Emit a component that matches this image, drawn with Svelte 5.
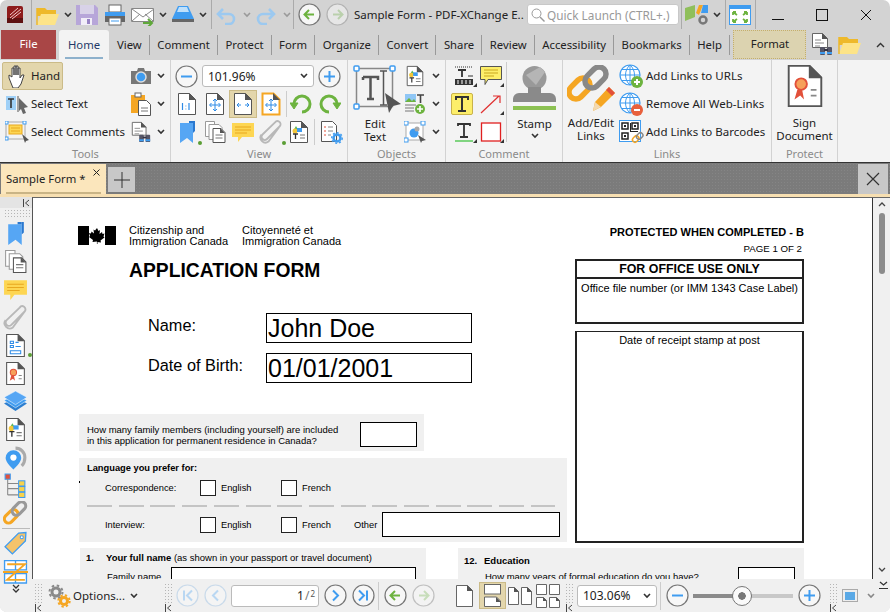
<script>
  const tabs = ['View', 'Comment', 'Protect', 'Form', 'Organize', 'Convert', 'Share', 'Review', 'Accessibility', 'Bookmarks', 'Help'];
  const PAPER = 'M3.5 1.5h11l6 6v15h-17z';
  const FOLD = 'M14 1l7 7h-7z';
</script>

{#snippet chev()}
  <svg class="chev" width="8" height="6" viewBox="0 0 8 6"><path d="M1 1l3 3 3-3" fill="none" stroke="#333" stroke-width="1.6" /></svg>
{/snippet}

{#snippet collapse()}
  <svg class="collapse" width="7" height="8" viewBox="0 0 7 8"><path d="M.5 0v8M6 1L2.5 4 6 7" fill="none" stroke="#444" /></svg>
{/snippet}

{#snippet round(d, ring, ink)}
  <svg class="round" width="23" height="23" viewBox="0 0 23 23">
    <circle cx="11.5" cy="11.5" r="10.5" fill="#f7f7f7" stroke={ring} stroke-width="1.2" />
    <path {d} fill="none" stroke={ink} stroke-width="2" />
  </svg>
{/snippet}

{#snippet paper(s, kind)}
  <svg width={s} height={s} viewBox="0 0 24 24">
    <path d={PAPER} fill="#fff" stroke={kind === 'fitorange' ? '#f5a623' : '#555'} stroke-width={kind === 'fitorange' ? 2 : 1} />
    <path d={FOLD} fill="#555" />
    {#if kind === '11'}
      <path d="M7.5 11v7M10.5 14h.8M10.5 17h.8M14 11v7" stroke="#2d8ae6" stroke-width="1.2" fill="none" />
    {:else if kind === 'fit' || kind === 'fitorange'}
      <path d="M12 7v12M7 13h10M10 9l2-2 2 2M10 17l2 2 2-2M8.5 11l-2 2 2 2M15.5 11l2 2-2 2" stroke="#2d8ae6" fill="none" />
    {:else if kind === 'wide'}
      <path d="M6 13h4M14 13h4M8 11l-2 2 2 2M16 11l2 2-2 2" stroke="#2d8ae6" fill="none" />
    {:else if kind === 'form'}
      <path d="M7 8h3v2H7zM7 12h3v2H7zM12 9h3M12 13h5M7 17h10v3H7z" stroke="#2d8ae6" fill="none" />
    {:else if kind === 'sign'}
      <circle cx="10" cy="11" r="3" fill="#f6a05a" stroke="#e2503a" />
      <path d="M8 14l-1.5 5 3-2 2 2-1-5" fill="#e2503a" />
      <path d="M15 14h3M15 17h3" stroke="#888" />
    {:else if kind === 'content'}
      <path d="M9 6l3 5H6z" fill="#5cb85c" /><circle cx="8" cy="11" r="2.5" fill="#f3c73b" /><rect x="10" y="8" width="5" height="4" fill="#3f9cf0" />
      <path d="M6 14h5M8.5 14v5" stroke="#333" stroke-width="1.3" /><path d="M13 15h5M13 18h5" stroke="#777" />
    {/if}
  </svg>
{/snippet}

{#snippet folder(s)}
  <svg width={s} height={s} viewBox="0 0 24 24">
    <path d="M1 5h8l2 2h9v6H1z" fill="#eeb92a" />
    <path d="M1 22l4-11h18l-4 11z" fill="#fde488" />
    <path d="M1 5v17" stroke="#eeb92a" stroke-width="1.5" />
  </svg>
{/snippet}

{#snippet binoculars(s)}
  <svg width={s} height={s} viewBox="0 0 24 24">
    <path d="M2.5 1.5h10l5 5v9h-15z" fill="#fff" stroke="#666" /><path d="M12 1l6 6h-6z" fill="#555" />
    <path d="M5 8h6M5 11h9M5 14h5" stroke="#888" />
    <rect x="10" y="15" width="5" height="8" rx="1" fill="#556" /><rect x="17" y="15" width="5" height="8" rx="1" fill="#556" /><rect x="14" y="17" width="4" height="2" fill="#334" />
    <path d="M10 21h5M17 21h5" stroke="#3f9cf0" stroke-width="2" />
  </svg>
{/snippet}

{#snippet bookmark(s)}
  <svg width={s} height={s} viewBox="0 0 24 24"><path d="M5 3h13v20l-6-5-7 5z" fill="#56a6f4" /><path d="M18 1h2v10l-2 2z" fill="#2a78cf" /><path d="M14 1h4v2h-4z" fill="#2a78cf" /></svg>
{/snippet}

{#snippet pages(s)}
  <svg width={s} height={s} viewBox="0 0 24 24">
    <path d="M2.5 1.5h9v15h-9z" fill="#fff" stroke="#999" /><path d="M6 4.5h10l3 3v12H6z" fill="#fff" stroke="#999" />
    <path d="M10 8.5h8l4 4v10H10z" fill="#fff" stroke="#555" /><path d="M17 8l5 5h-5z" fill="#555" />
    <path d="M12.5 15h7M12.5 18h7" stroke="#777" />
  </svg>
{/snippet}

{#snippet note(s)}
  <svg width={s} height={s} viewBox="0 0 24 24"><path d="M1 3h22v14H11l-4 5v-5H1z" fill="#fdd653" /><path d="M4 7h16M4 10h16M4 13h12" stroke="#e8a820" /></svg>
{/snippet}

{#snippet clip(s)}
  <svg width={s} height={s} viewBox="0 0 24 24"><path d="M21 5.5L8 18.5a3 3 0 0 1-4.5-4.5L16 2a3 3 0 0 1 5 3.5L9.5 21a5 5 0 0 1-7-7" transform="translate(0 .5)" fill="none" stroke="#b8b8b8" stroke-width="1.8" /></svg>
{/snippet}

{#snippet layers(s)}
  <svg width={s} height={s} viewBox="0 0 24 24">
    <path d="M1 14l11-6 11 6-11 7z" fill="#2d7fd0" /><path d="M1 11l11-6 11 6-11 7z" fill="#3f9cf0" stroke="#fff" stroke-width=".5" /><path d="M1 8l11-6 11 6-11 7z" fill="#56a6f4" stroke="#fff" stroke-width=".5" />
  </svg>
{/snippet}

{#snippet pin(s)}
  <svg width={s} height={s} viewBox="0 0 24 24"><path d="M12 3c5 0 9 4 9 9 0 3-1 6-3 8" fill="none" stroke="#aaa" stroke-width="3" /><path d="M10 5a7.5 7.5 0 0 1 7.5 7.5C17.5 17 10 23.5 10 23.5S2.5 17 2.5 12.5A7.5 7.5 0 0 1 10 5z" fill="#3f9cf0" /><circle cx="10" cy="12" r="3" fill="#fff" /></svg>
{/snippet}

{#snippet tree(s)}
  <svg width={s} height={s} viewBox="0 0 24 24">
    <rect x="2" y="1" width="5" height="5" fill="#e2503a" stroke="#3f9cf0" /><path d="M4.5 6v15M4.5 10h11M4.5 15h11M4.5 21h11" stroke="#888" fill="none" />
    <rect x="15" y="7.5" width="6" height="5" fill="#f9d24a" stroke="#3f9cf0" /><rect x="15" y="13" width="6" height="5" fill="#f9d24a" stroke="#3f9cf0" /><rect x="15" y="18.5" width="6" height="5" fill="#f9d24a" stroke="#3f9cf0" />
  </svg>
{/snippet}

{#snippet chain(s)}
  <svg width={s} height={s} viewBox="0 0 24 24">
    <rect x="0" y="-4" width="15" height="8" rx="4" transform="translate(2.5 20) rotate(-45)" fill="none" stroke="#f5a623" stroke-width="3" />
    <rect x="0" y="-4" width="15" height="8" rx="4" transform="translate(10 12.5) rotate(-45)" fill="none" stroke="#999" stroke-width="3" />
  </svg>
{/snippet}

{#snippet tag(s)}
  <svg width={s} height={s} viewBox="0 0 24 24"><path d="M2 15L15 2l7-.5-.5 8L9 22z" fill="#f4c36b" stroke="#3f9cf0" stroke-width="1.3" /><circle cx="18" cy="6" r="1.5" fill="#fff" stroke="#3f9cf0" /></svg>
{/snippet}

{#snippet compare(s)}
  <svg width={s} height={s} viewBox="0 0 24 24">
    <path d="M1.5 1.5h21v9h-21zM1.5 14h21v9h-21zM12 1.5v9M12 14v9" fill="#fff" stroke="#3f9cf0" stroke-width="1.3" />
    <path d="M0 12.5h24M4 5h17L4 20h17" fill="none" stroke="#f5a623" stroke-width="1.8" />
  </svg>
{/snippet}

{#snippet gears()}
  <svg width="24" height="24" viewBox="0 0 24 24">
    <circle cx="9" cy="8" r="4" fill="none" stroke="#8a8a8a" stroke-width="3" />
    <circle cx="9" cy="8" r="6.5" fill="none" stroke="#8a8a8a" stroke-width="2" stroke-dasharray="2.5 2.6" />
    <circle cx="17" cy="17" r="3.5" fill="none" stroke="#f5a623" stroke-width="3" />
    <circle cx="17" cy="17" r="5.7" fill="none" stroke="#f5a623" stroke-width="2" stroke-dasharray="2.3 2.2" />
  </svg>
{/snippet}

{#snippet globe(kind)}
  <svg width="25" height="25" viewBox="0 0 25 25">
    <circle cx="11" cy="11" r="10" fill="#fff" stroke="#3f9cf0" stroke-width="1.2" />
    <path d="M1 11h20M3 5.5h16M3 16.5h16M11 1v20M11 1c-6 5-6 15 0 20M11 1c6 5 6 15 0 20" fill="none" stroke="#3f9cf0" />
    {#if kind === 'add'}
      <circle cx="18" cy="18" r="6" fill="#6db33f" /><path d="M15 18h6M18 15v6" stroke="#fff" stroke-width="2" />
    {:else}
      <circle cx="18" cy="18" r="6" fill="#e8603c" /><path d="M15 18h6" stroke="#fff" stroke-width="2" />
    {/if}
  </svg>
{/snippet}

{#snippet winCorner()}
  <svg class="corner" width="4" height="4" viewBox="0 0 4 4"><path d="M4 0v4H0z" fill="#333" /></svg>
{/snippet}

<div class="app">
  <header class="titlebar">
    <svg width="16" height="17" viewBox="0 0 16 17">
      <rect width="16" height="17" rx="2" fill="#8e1c1c" /><path d="M0 12h16v5H0z" fill="#5e1010" />
      <path d="M3 12L14 3M5 13l9-7M3 9l8-7" stroke="#f3c9c9" />
    </svg>
    <i class="sep first"></i>
    {@render folder(24)}
    {@render chev()}
    <svg width="22" height="22" viewBox="0 0 22 22">
      <path d="M0 1h19l3 3v17H0z" fill="#b7a6d9" /><rect x="4" y="1" width="14" height="9" fill="#d8d2e8" /><rect x="5" y="14" width="11" height="7" fill="#f1eef8" /><rect x="11" y="15" width="3" height="5" fill="#9783c4" />
    </svg>
    <svg class="ml2" width="22" height="22" viewBox="0 0 22 22">
      <rect x="5" y="1" width="12" height="7" fill="#fff" stroke="#666" /><path d="M1 8h20v9H1z" fill="#3f9cf0" /><path d="M1 12h20v6H1z" fill="#666" /><rect x="5" y="14" width="12" height="7" fill="#fff" stroke="#666" /><path d="M7 17h8" stroke="#3f9cf0" />
    </svg>
    <svg class="ml1" width="24" height="22" viewBox="0 0 24 22">
      <path d="M.5 4.5h22v13H.5z" fill="#fff" stroke="#888" /><path d="M1 5l11 8 11-8M1 17l8-7M22 17l-8-7" fill="none" stroke="#888" /><path d="M12 19h8M17 15l4 4-4 4" fill="none" stroke="#5fa83a" stroke-width="2" />
    </svg>
    {@render chev()}
    <svg width="24" height="22" viewBox="0 0 24 22"><path d="M7 2h10l6 13H1z" fill="#3f9cf0" /><path d="M8 3h8l2 5H6z" fill="#bfe0fb" /><path d="M1 15h22v3H1z" fill="#666" /></svg>
    {@render chev()}
    <i class="sep"></i>
    <svg width="20" height="20" viewBox="0 0 20 20"><path d="M2 9h11a5 5 0 0 1 0 10H9M7 4L2 9l5 5" fill="none" stroke="#9cc9f0" stroke-width="2.6" /></svg>
    <span class="ml3 dim">{@render chev()}</span>
    <svg class="ml1" width="20" height="20" viewBox="0 0 20 20"><path d="M18 9H7a5 5 0 0 0 0 10h4M13 4l5 5-5 5" fill="none" stroke="#9cc9f0" stroke-width="2.6" /></svg>
    <span class="ml3 dim">{@render chev()}</span>
    <i class="sep mn2"></i>
    {@render round('M16 11.5H7M11 7l-4.5 4.5L11 16', '#777', '#6db33f')}
    <span class="ml1 faded">{@render round('M7 11.5h9M12 7l4.5 4.5L12 16', '#999', '#a6cf8e')}</span>
    <span class="doc-title ml1">Sample Form - PDF-XChange E..</span>
    <div class="quick">
      <svg width="14" height="14" viewBox="0 0 14 14"><circle cx="5.5" cy="5.5" r="4.5" fill="none" stroke="#999" /><path d="M9 9l4.5 4.5" stroke="#999" stroke-width="1.4" /></svg>
      <span>Quick Launch (CTRL+.)</span>
    </div>
    <i class="sep mn2"></i>
    <svg class="mn1" width="24" height="22" viewBox="0 0 24 22">
      <path d="M0 4l10-3v12L0 17z" fill="#8fbf5a" /><path d="M11 9l3-8h4l-4 10z" fill="#f5a623" /><path d="M18 1h5v8h-7z" fill="#3f9cf0" />
      <circle cx="18" cy="16" r="3.5" fill="none" stroke="#777" stroke-width="2.5" />
    </svg>
    {@render chev()}
    <i class="sep"></i>
    <svg class="mn1" width="22" height="20" viewBox="0 0 22 20">
      <rect x=".5" y=".5" width="21" height="19" fill="#fff" stroke="#3f9cf0" /><path d="M1 1h20v3H1z" fill="#3f9cf0" />
      <path d="M4 7l4 3M4 7v3M4 7h3M18 7l-4 3M18 7v3M18 7h-3M4 17l4-3M4 17v-3M4 17h3M18 17l-4-3M18 17v-3M18 17h-3" stroke="#6db33f" stroke-width="1.8" fill="none" />
    </svg>
    <i class="sep"></i>
    <div class="winbtns">
      <span><svg width="12" height="12" viewBox="0 0 12 12"><path d="M0 10.5h12" stroke="#111" /></svg></span>
      <span><svg width="12" height="12" viewBox="0 0 12 12"><rect x=".5" y=".5" width="11" height="11" fill="none" stroke="#111" /></svg></span>
      <span><svg width="12" height="12" viewBox="0 0 12 12"><path d="M1 1l10 10M11 1L1 11" stroke="#111" /></svg></span>
    </div>
  </header>

  <nav class="tabrow">
    <div class="file">File</div>
    <div class="home"><span>Home</span></div>
    {#each tabs as t}
      <div class="tab">{t}</div>
    {/each}
    <div class="format">Format</div>
    <div class="tabicons">
      {@render binoculars(24)}
      {@render folder(24)}
    </div>
    <svg class="fold" width="9" height="6" viewBox="0 0 9 6"><path d="M1 5l3.5-3.5L8 5" fill="none" stroke="#333" stroke-width="1.4" /></svg>
  </nav>

  <section class="ribbon">
    <div class="group tools">
      <div class="body">
        <div class="row">
          <div class="tool active">
            <svg width="20" height="24" viewBox="0 0 20 24"><path d="M2 14V11l3 2V4h2v7-9h2v9-9h2v9-7h2v10l2-3h2l-3 9-3 4H6z" fill="#fff" stroke="#444" /></svg>
            <span>Hand</span>
          </div>
          <div class="end">
            <svg width="22" height="18" viewBox="0 0 22 18"><path d="M1 4h6l1-3h6l1 3h6v13H1z" fill="#777" /><circle cx="11" cy="10" r="5" fill="#3f9cf0" stroke="#ddd" stroke-width="1.5" /></svg>
            {@render chev()}
          </div>
        </div>
        <div class="row">
          <div class="tool">
            <svg width="24" height="22" viewBox="0 0 24 22"><rect x="1" y="3" width="10" height="14" fill="#9fd0f7" /><path d="M3 6h6M6 6v9" stroke="#333" stroke-width="1.6" /><path d="M13 3v16" stroke="#555" /><path d="M14 5l9 9-4 1 2 5-3 1-2-5-2 2z" fill="#666" /></svg>
            <span>Select Text</span>
          </div>
          <div class="end">
            <svg width="22" height="24" viewBox="0 0 22 24"><rect x="1" y="3" width="14" height="18" fill="#f5a623" /><rect x="5" y="1" width="6" height="4" fill="#fff" stroke="#666" /><path d="M8.5 8.5h8l4 4v11h-12z" fill="#fff" stroke="#555" /><path d="M11 16h7M11 19h7" stroke="#777" /></svg>
            {@render chev()}
          </div>
        </div>
        <div class="row">
          <div class="tool">
            <svg width="24" height="22" viewBox="0 0 24 22"><rect x="1" y="1" width="19" height="17" fill="none" stroke="#aaa" /><rect x="4" y="4" width="13" height="9" fill="#fdd653" stroke="#e8a820" /><path d="M6 7h9M6 10h9" stroke="#e8a820" /><rect x="0" y="0" width="3" height="3" fill="#fff" stroke="#3f9cf0" /><rect x="18" y="0" width="3" height="3" fill="#fff" stroke="#3f9cf0" /><rect x="0" y="16" width="3" height="3" fill="#fff" stroke="#3f9cf0" /><path d="M17 13l7 6-3 1-1 2z" fill="#555" /></svg>
            <span>Select Comments</span>
          </div>
          <div class="end">
            {@render binoculars(22)}
            {@render chev()}
          </div>
        </div>
      </div>
      <div class="label">Tools</div>
    </div>

    <div class="group view">
      <div class="body">
        <div class="zoomrow">
          {@render round('M6 11.5h11', '#777', '#3f9cf0')}
          <div class="combo"><span>101.96%</span>{@render chev()}</div>
          {@render round('M6 11.5h11M11.5 6v11', '#777', '#3f9cf0')}
        </div>
        <div class="viewrow">
          <span class="vi">{@render paper(24, '11')}</span>
          <span class="vi">{@render paper(24, 'fit')}</span>
          <span class="vi on">{@render paper(24, 'wide')}</span>
          <span class="vi">{@render paper(24, 'fitorange')}</span>
          <i class="vsep"></i>
          <svg class="mn1" width="23" height="22" viewBox="0 0 23 22"><path d="M12 19A8 8 0 1 0 4 11" fill="none" stroke="#6db33f" stroke-width="3" /><path d="M0 10l4 6 4-6z" fill="#6db33f" stroke="#6db33f" /></svg>
          <svg class="ml1" width="23" height="22" viewBox="0 0 23 22"><path d="M11 19A8 8 0 1 1 19 11" fill="none" stroke="#6db33f" stroke-width="3" /><path d="M15 10l4 6 4-6z" fill="#6db33f" stroke="#6db33f" /></svg>
        </div>
        <div class="viewrow">
          <span class="vi dot">{@render bookmark(24)}</span>
          {@render pages(24)}
          {@render note(24)}
          <span class="dot">{@render clip(24)}</span>
          {@render paper(24, 'content')}
          <i class="vsep"></i>
          <svg width="24" height="24" viewBox="0 0 24 24"><path d="M2.5 1.5h11l4 4v16h-15z" fill="#fff" stroke="#555" /><path d="M5 7h2M5 11h2M5 15h2" stroke="#e2503a" /><path d="M9 7h5M9 11h5M9 15h3" stroke="#888" /><circle cx="18" cy="18" r="3.5" fill="none" stroke="#3f9cf0" stroke-width="2.5" /><circle cx="18" cy="18" r="5.3" fill="none" stroke="#3f9cf0" stroke-width="1.3" stroke-dasharray="2 2" /></svg>
        </div>
      </div>
      <div class="label">View</div>
    </div>

    <div class="group objects">
      <div class="body split">
        <div class="big edit">
          <svg width="48" height="49" viewBox="0 0 48 49">
            <rect x="3.5" y="3.5" width="36" height="38" fill="none" stroke="#888" stroke-width="1.5" />
            <path d="M10 12h15v3M10 15v-3M17.5 12v22M14 34h7" fill="none" stroke="#555" stroke-width="2.5" />
            <path d="M27 6h7M27 40h7M30.5 6v34" fill="none" stroke="#555" stroke-width="1.5" />
            <rect x="1" y="1" width="5" height="5" rx="1" fill="#fff" stroke="#3f9cf0" stroke-width="1.5" /><rect x="37" y="1" width="5" height="5" rx="1" fill="#fff" stroke="#3f9cf0" stroke-width="1.5" /><rect x="1" y="39" width="5" height="5" rx="1" fill="#fff" stroke="#3f9cf0" stroke-width="1.5" />
            <path d="M32 28l16 11-8 2-4 7z" fill="#555" />
          </svg>
          <span>Edit<br />Text</span>
        </div>
        <div class="minis">
          <div class="mini">{@render paper(22, 'content')}{@render chev()}</div>
          <div class="mini">
            <svg width="22" height="22" viewBox="0 0 22 22"><rect x="1" y="1" width="11" height="8" fill="#8fc6f5" /><path d="M1 9l4-4 3 3 2-2 2 3H1z" fill="#6db33f" /><path d="M13 2h7M16.5 2v8" stroke="#444" stroke-width="1.6" /><path d="M1 12h11M1 15h9M1 18h9" stroke="#777" /><circle cx="16" cy="16" r="5" fill="#6db33f" /><path d="M13 16h6M16 13v6" stroke="#fff" stroke-width="1.6" /></svg>
            {@render chev()}
          </div>
          <div class="mini">
            <svg width="22" height="22" viewBox="0 0 22 22"><rect x="2" y="2" width="17" height="17" fill="#fff" stroke="#aaa" /><circle cx="10" cy="12" r="4.5" fill="#3f9cf0" /><circle cx="13" cy="8" r="2.5" fill="#aaa" /><rect x="0" y="0" width="4" height="4" fill="#fff" stroke="#3f9cf0" /><rect x="17" y="0" width="4" height="4" fill="#fff" stroke="#3f9cf0" /><rect x="0" y="17" width="4" height="4" fill="#fff" stroke="#3f9cf0" /><path d="M14 14l8 5-4 1-1 2z" fill="#555" /></svg>
            {@render chev()}
          </div>
        </div>
      </div>
      <div class="label">Objects</div>
    </div>

    <div class="group comment">
      <div class="body split">
        <div class="cgrid">
          <span class="cell">
            <svg width="20" height="20" viewBox="0 0 20 20"><path d="M1 1h18" stroke="#333" stroke-dasharray="1 1" /><path d="M4 4h8M8 4v7" stroke="#333" stroke-width="1.8" /><path d="M14 10h5" stroke="#333" /><path d="M1 13h18v6H1z" fill="#333" /><path d="M3 15h2M7 15h2M11 15h2M15 15h2M3 17h2M7 17h2M11 17h2M15 17h2" stroke="#fff" /></svg>{@render winCorner()}
          </span>
          <span class="cell">
            <svg width="24" height="22" viewBox="0 0 24 22"><path d="M1.5 1.5h21v13H9l-3 5v-5H1.5z" fill="#fdee6a" stroke="#555" /><path d="M5 5h14M5 8h14M5 11h10" stroke="#c9a61e" /></svg>{@render winCorner()}
          </span>
          <span class="cell yellow"><svg width="20" height="20" viewBox="0 0 20 20"><path d="M4 6V3h12v3M10 3v14M6 17h8" fill="none" stroke="#333" stroke-width="2" /></svg></span>
          <span class="cell">
            <svg width="22" height="22" viewBox="0 0 22 22"><path d="M1 20L19 3M13 3h7v7" fill="none" stroke="#e03030" stroke-width="1.2" /></svg>{@render winCorner()}
          </span>
          <span class="cell">
            <svg width="20" height="20" viewBox="0 0 20 20"><path d="M4 4V2h12v2M10 2v13M6 15h8" fill="none" stroke="#333" stroke-width="1.8" /><path d="M1 19h18" stroke="#35c035" stroke-width="1.2" /></svg>{@render winCorner()}
          </span>
          <span class="cell">
            <svg width="22" height="20" viewBox="0 0 22 20"><rect x="1.5" y="1" width="19" height="18" fill="#fff" stroke="#e02020" stroke-width="1.3" /></svg>{@render winCorner()}
          </span>
        </div>
        <i class="csep"></i>
        <div class="big stamp">
          <svg width="45" height="46" viewBox="0 0 45 46">
            <circle cx="22.5" cy="13" r="12" fill="#999" /><path d="M14 10L28 2l5 5-9 13z" fill="#b5b5b5" />
            <path d="M16 22h13v6h9a6 6 0 0 1 6 6v3H1v-3a6 6 0 0 1 6-6h9z" fill="#8a8a8a" /><rect x="1" y="41" width="43" height="4" fill="#8cc152" />
          </svg>
          <span>Stamp</span>
          {@render chev()}
        </div>
      </div>
      <div class="label">Comment</div>
    </div>

    <div class="group links">
      <div class="body split">
        <div class="big addlink">
          <svg width="48" height="50" viewBox="0 0 48 50">
            <rect x="0" y="-7" width="24" height="14" rx="7" transform="translate(4 32) rotate(-45)" fill="none" stroke="#f5a623" stroke-width="5.5" />
            <rect x="0" y="-7" width="24" height="14" rx="7" transform="translate(20 21) rotate(-45)" fill="none" stroke="#888" stroke-width="5.5" />
            <path d="M26 46l2-9 14-15 6 6-14 14z" fill="#f5a623" /><path d="M26 46l2-9 6 5z" fill="#f3d9b0" /><path d="M39 25l6 6 3-3-6-6z" fill="#e2503a" />
          </svg>
          <span>Add/Edit<br />Links</span>
        </div>
        <div class="linklist">
          <div class="lrow">{@render globe('add')}<span>Add Links to URLs</span></div>
          <div class="lrow">{@render globe('del')}<span>Remove All Web-Links</span></div>
          <div class="lrow">
            <svg width="25" height="25" viewBox="0 0 25 25">
              <rect x=".5" y=".5" width="21" height="21" fill="#fff" stroke="#3f9cf0" />
              <path d="M3 3h6v6H3zM13 3h6v6h-6zM3 13h6v6H3z" fill="none" stroke="#222" stroke-width="1.5" /><path d="M5 5h2v2H5zM15 5h2v2h-2zM5 15h2v2H5zM11 3h1v9h-1zM12 11h7v1h-7z" fill="#222" />
              <rect x="13" y="17" width="7" height="5" rx="2.5" transform="rotate(-45 16 19)" fill="none" stroke="#f5a623" stroke-width="1.5" />
              <rect x="17" y="14" width="7" height="5" rx="2.5" transform="rotate(-45 20 16)" fill="none" stroke="#888" stroke-width="1.5" />
            </svg>
            <span>Add Links to Barcodes</span>
          </div>
        </div>
      </div>
      <div class="label">Links</div>
    </div>

    <div class="group protect">
      <div class="body">
        <div class="big">
          <span class="signicon">{@render paper(46, 'sign')}</span>
          <span>Sign<br />Document</span>
        </div>
      </div>
      <div class="label">Protect</div>
    </div>
  </section>

  <div class="docbar">
    <div class="doctab">
      <span>Sample Form *</span>
      <svg width="7" height="7" viewBox="0 0 7 7"><path d="M.5.5l6 6M6.5.5l-6 6" stroke="#222" /></svg>
    </div>
    <div class="newtab"><svg width="16" height="16" viewBox="0 0 16 16"><path d="M8 0v16M0 8h16" stroke="#333" /></svg></div>
    <div class="closeall"><svg width="14" height="14" viewBox="0 0 14 14"><path d="M1 1l12 12M13 1L1 13" stroke="#333" stroke-width="1.2" /></svg></div>
  </div>

  <div class="work">
    <aside class="sidebar">
      <div class="sidetop">{@render collapse()}</div>
      <div class="grip wide"></div>
      <div class="sideicons">
        {@render bookmark(25)}
        {@render pages(25)}
        {@render note(25)}
        {@render clip(25)}
        <span class="dot side">{@render paper(25, 'form')}</span>
        {@render paper(25, 'sign')}
        {@render layers(25)}
        {@render paper(25, 'content')}
        {@render pin(25)}
        {@render tree(25)}
        {@render chain(25)}
        <i class="hline"></i>
        {@render tag(25)}
        {@render compare(25)}
        <svg class="more" width="8" height="9" viewBox="0 0 8 9"><path d="M1 1l3 3 3-3M1 5l3 3 3-3" fill="none" stroke="#333" stroke-width="1.3" /></svg>
      </div>
    </aside>

    <div class="right">
      <div class="viewer">
        <main class="page">
          <div class="top">
            <div class="leftcol">
              <div class="gov">
                <svg class="flag" width="38" height="19" viewBox="0 0 38 19">
                  <rect width="11" height="19" fill="#000" /><rect x="27" width="11" height="19" fill="#000" />
                  <path d="M19 2l1.5 3 1.5-1-.5 4 2.5-2 .5 2 2-.5-1 3 1 1-4 3 .5 2-3.5-.5V18h-.6v-2.5L14.5 16l.5-2-4-3 1-1-1-3 2 .5.5-2 2.5 2-.5-4 1.5 1z" fill="#000" />
                </svg>
                <p>Citizenship and<br />Immigration Canada</p>
                <p class="fr">Citoyenneté et<br />Immigration Canada</p>
              </div>
              <h1>APPLICATION FORM</h1>
              <div class="namerow">
                <span class="nlabel">Name:</span>
                <div class="bigfield">John Doe</div>
              </div>
              <div class="namerow dob">
                <span class="nlabel">Date of Birth:</span>
                <div class="bigfield">01/01/2001</div>
              </div>

              <div class="shade family">
                <p>How many family members (including yourself) are included<br />in this application for permanent residence in Canada?</p>
                <div class="box famnum"></div>
              </div>

              <div class="shade lang">
                <b>Language you prefer for:</b>
                <div class="langrow first">
                  <span class="lname">Correspondence:</span>
                  <i class="check"></i><span class="lopt">English</span>
                  <i class="check"></i><span>French</span>
                </div>
                <div class="dashes"></div>
                <div class="langrow second">
                  <span class="lname">Interview:</span>
                  <i class="check"></i><span class="lopt">English</span>
                  <i class="check"></i><span class="lfr">French</span>
                  <span>Other</span>
                  <div class="box other"></div>
                </div>
              </div>
            </div>

            <div class="rightcol">
              <div class="protected">PROTECTED WHEN COMPLETED - B</div>
              <div class="pagenum">PAGE 1 OF 2</div>
              <div class="office">
                <div class="ohead">FOR OFFICE USE ONLY</div>
                <div class="obody">Office file number (or IMM 1343 Case Label)</div>
              </div>
              <div class="receipt">Date of receipt stamp at post</div>
            </div>
          </div>

          <div class="bottom">
            <div class="shade sec1">
              <div><b class="num">1.</b><b>Your full name</b> (as shown in your passport or travel document)</div>
              <div class="famrow"><span>Family name</span><div class="box famname"></div></div>
            </div>
            <div class="shade sec12">
              <div class="edu"><b class="num12">12.</b><b>Education</b></div>
              <div class="years"><span>How many years of formal education do you have?</span><div class="box yearsbox"></div></div>
            </div>
          </div>
        </main>
        <div class="scrollbar">
          <svg width="8" height="6" viewBox="0 0 8 6"><path d="M1 5l3-3 3 3" fill="none" stroke="#444" stroke-width="1.3" /></svg>
          <div class="thumb"></div>
          <svg class="down" width="8" height="6" viewBox="0 0 8 6"><path d="M1 1l3 3 3-3" fill="none" stroke="#444" stroke-width="1.3" /></svg>
        </div>
      </div>

      <footer class="status">
        <div class="griphold">
          <div class="grip"></div>
          {@render collapse()}
        </div>
        <span class="gears">{@render gears()}</span>
        <span class="options">Options...</span>
        {@render chev()}
        <div class="griphold g2">
          <div class="grip"></div>
          {@render collapse()}
        </div>
        <span class="faded mn2">{@render round('M8 6.5v10M16 6.5l-5 5 5 5', '#aac9e6', '#8cc4f5')}</span>
        <span class="faded">{@render round('M14 6.5l-5 5 5 5', '#aac9e6', '#8cc4f5')}</span>
        <div class="pagebox"><span class="cur">1</span><span class="slash">/</span><span class="tot">2</span></div>
        {@render round('M9 6.5l5 5-5 5', '#777', '#3f9cf0')}
        {@render round('M15 6.5v10M7 6.5l5 5-5 5', '#777', '#3f9cf0')}
        <i class="ssep"></i>
        {@render round('M16 11.5H7M11 7l-4.5 4.5L11 16', '#777', '#6db33f')}
        <span class="faded">{@render round('M7 11.5h9M12 7l4.5 4.5L12 16', '#999', '#a6cf8e')}</span>
        <span class="layouts">
          <svg width="17" height="22" viewBox="0 0 17 22"><path d="M.5.5h11l5 5v16H.5z" fill="#fff" stroke="#666" /><path d="M11 0l6 6h-6z" fill="#555" /></svg>
          <span class="lay-on">
            <svg width="17" height="23" viewBox="0 0 17 23"><rect x=".5" y=".5" width="16" height="9.5" fill="#fff" stroke="#666" /><path d="M.5 13h12l4 4v5.5H.5z" fill="#fff" stroke="#666" /><path d="M12 13l5 5h-5z" fill="#555" /></svg>
          </span>
          <svg class="mn2" width="24" height="20" viewBox="0 0 24 20"><path d="M.5 1.5h6l4 4v13H.5zM13.5 1.5h6l4 4v13h-10z" fill="#fff" stroke="#666" /><path d="M6 1l5 5H6zM19 1l5 5h-5z" fill="#555" /></svg>
          <svg width="24" height="24" viewBox="0 0 24 24"><path d="M.5.5h10v10H.5zM13.5.5h10v10h-10zM.5 13.5h7l3 3v7H.5zM13.5 13.5h7l3 3v7h-10z" fill="#fff" stroke="#666" /><path d="M7 13l4 4H7zM20 13l4 4h-4z" fill="#555" /></svg>
        </span>
        <div class="griphold">
          <div class="grip"></div>
          {@render collapse()}
        </div>
        <div class="combo small"><span>103.06%</span>{@render chev()}</div>
        <i class="ssep"></i>
        {@render round('M6 11.5h11', '#777', '#3f9cf0')}
        <div class="slider"><div class="fill"></div><div class="knob"></div></div>
        {@render round('M6 11.5h11M11.5 6v11', '#777', '#3f9cf0')}
        <div class="griphold g4">
          <div class="grip"></div>
          {@render collapse()}
        </div>
        <svg class="preview" width="16" height="13" viewBox="0 0 16 13"><rect x=".5" y=".5" width="15" height="12" fill="#eee" stroke="#aaa" /><rect x="3" y="3" width="10" height="8" fill="#5aa9e6" /></svg>
        <span class="faded last">{@render chev()}</span>
        <svg class="pin-down" width="9" height="9" viewBox="0 0 9 9"><path d="M1 1l3.5 3L8 1" fill="none" stroke="#333" stroke-width="1.3" /><path d="M0 7.5h9" stroke="#333" stroke-width="1.2" /></svg>
      </footer>
    </div>
  </div>
</div>

<style>
  :global(body) {
    margin: 0;
    background: #fff;
  }

  .app {
    width: 890px;
    height: 612px;
    overflow: hidden;
    display: flex;
    flex-direction: column;
    border-radius: 7px;
    background: #d3d3d3;
    font-family: "Noto Sans", sans-serif;
    font-size: 11.5px;
    color: #222;
  }

  svg {
    flex: none;
    display: block;
  }

  i {
    display: block;
    flex: none;
  }

  .ml1 { margin-left: 1px; }
  .ml2 { margin-left: 2px; }
  .ml3 { margin-left: 3px; }
  .mn1 { margin-left: -1px; }
  .mn2 { margin-left: -2px; }
  .dim { opacity: 0.35; }
  .faded { opacity: 0.55; }

  /* title bar */
  .titlebar {
    height: 29px;
    flex: none;
    display: flex;
    align-items: center;
    gap: 4px;
    padding-left: 7px;
    box-sizing: border-box;
  }

  .titlebar > * {
    flex: none;
  }

  .sep {
    width: 1px;
    height: 29px;
    background: #aaa;
  }

  .sep.first {
    margin-left: 4px;
  }

  .doc-title {
    width: 171px;
    white-space: nowrap;
    overflow: hidden;
  }

  .quick {
    width: 152px;
    height: 21px;
    margin-left: -2px;
    box-sizing: border-box;
    display: flex;
    align-items: center;
    gap: 2px;
    padding-left: 3px;
    background: #fff;
    border: 1px solid #c8c8c8;
    border-radius: 3px;
    color: #999;
    white-space: nowrap;
    font-size: 11.8px;
  }

  .winbtns {
    margin-left: -4px;
    display: flex;
  }

  .winbtns span {
    width: 44px;
    display: flex;
    justify-content: center;
  }

  /* ribbon tabs */
  .tabrow {
    height: 31px;
    flex: none;
    display: flex;
    align-items: flex-end;
    padding-left: 1px;
    box-sizing: border-box;
    font-size: 11.3px;
  }

  .tabrow > * {
    flex: none;
  }

  .file {
    width: 55px;
    height: 29px;
    margin: 0 3px 1px 0;
    box-sizing: border-box;
    padding-bottom: 2px;
    background: #a94646;
    color: #fff;
    display: flex;
    align-items: center;
    justify-content: center;
  }

  .home {
    width: 50px;
    height: 30px;
    box-sizing: border-box;
    padding-bottom: 2px;
    background: #f3f3f3;
    border-radius: 3px 3px 0 0;
    color: #1f3a68;
    display: flex;
    justify-content: center;
    align-items: center;
    position: relative;
    margin-right: 8px;
  }

  .home::after {
    content: "";
    position: absolute;
    left: 6px;
    right: 6px;
    bottom: 1px;
    height: 2px;
    background: #8eb1cc;
  }

  .tab {
    height: 20px;
    margin-bottom: 5px;
    box-sizing: border-box;
    padding: 0 7px 2px 0;
    display: flex;
    align-items: center;
    margin-right: 7.6px;
    border-right: 1px solid #999;
    white-space: nowrap;
  }

  .format {
    width: 73px;
    height: 29px;
    margin: 0 0 1px -4px;
    box-sizing: border-box;
    padding-bottom: 2px;
    background: #dcd3b0;
    border: 1px dotted #c4ae6c;
    display: flex;
    align-items: center;
    justify-content: center;
  }

  .tabicons {
    display: flex;
    gap: 4px;
    margin: 0 0 4px 4px;
  }

  .fold {
    margin: 0 0 12px 14px;
  }

  /* ribbon */
  .ribbon {
    height: 102px;
    flex: none;
    display: flex;
    background: #f3f3f3;
    box-sizing: border-box;
    padding-left: 1px;
  }

  .group {
    flex: none;
    height: 100%;
    display: flex;
    flex-direction: column;
    border-right: 1px solid #d2d2d2;
    box-sizing: border-box;
  }

  .body {
    height: 87px;
    box-sizing: border-box;
    padding-top: 2px;
  }

  .body.split {
    display: flex;
  }

  .label {
    text-align: center;
    color: #8a8a8a;
    font-size: 11px;
    line-height: 14px;
  }

  .tools { width: 170px; }
  .view { width: 177px; }
  .objects { width: 98px; }
  .comment { width: 117px; }
  .links { width: 209px; }
  .protect { width: 66px; }

  .row {
    height: 28px;
    display: flex;
    align-items: center;
    justify-content: space-between;
    padding: 0 5px 0 1px;
  }

  .tool {
    height: 28px;
    box-sizing: border-box;
    display: flex;
    align-items: center;
    gap: 2px;
    padding: 0 2px;
    border: 1px solid transparent;
  }

  .tool span,
  .lrow span {
    padding-bottom: 2px;
  }

  .tool.active {
    width: 61px;
    padding: 0 0 0 4px;
    background: #e3d6ac;
    border-color: #cbbb88;
    border-radius: 2px;
    gap: 4px;
  }

  .end {
    display: flex;
    align-items: center;
    gap: 5px;
    width: 35px;
  }

  .zoomrow {
    display: flex;
    align-items: center;
    gap: 4px;
    height: 28px;
    padding-left: 4px;
  }

  .combo {
    width: 112px;
    height: 22px;
    flex: none;
    box-sizing: border-box;
    display: flex;
    align-items: center;
    justify-content: space-between;
    padding: 0 5px;
    background: #fff;
    border: 1px solid #bbb;
    border-radius: 3px;
    font-size: 12px;
  }

  .viewrow {
    display: flex;
    align-items: center;
    gap: 4px;
    height: 28px;
    padding-left: 4px;
  }

  .vi {
    display: block;
  }

  .vi.on {
    background: #e3d6ac;
    box-shadow: 0 0 0 2px #e3d6ac;
    outline: 1px solid #cbbb88;
    outline-offset: 1px;
  }

  .dot {
    position: relative;
    display: block;
  }

  .dot::after {
    content: "";
    position: absolute;
    right: -3px;
    bottom: -1px;
    width: 4px;
    height: 4px;
    border-radius: 50%;
    background: #5a9e34;
  }

  .vsep {
    width: 1px;
    height: 26px;
    margin-left: -1px;
    background: #ccc;
  }

  .big {
    display: flex;
    flex-direction: column;
    align-items: center;
    text-align: center;
    line-height: 13px;
  }

  .big > span {
    display: block;
  }

  .edit {
    width: 54px;
    padding-top: 3px;
    gap: 3px;
  }

  .edit svg {
    margin-left: 4px;
  }

  .minis {
    margin-left: 2px;
  }

  .mini {
    height: 28px;
    display: flex;
    align-items: center;
    gap: 6px;
  }

  .cgrid {
    display: grid;
    grid-template-columns: 27px 27px;
    grid-auto-rows: 28px;
    padding-left: 4px;
  }

  .cell {
    position: relative;
    display: flex;
    align-items: center;
    justify-content: center;
  }

  .cell.yellow {
    width: 22px;
    height: 22px;
    margin: 3px 0 0 1px;
    background: #fdee6a;
    border: 1px solid #c9b24a;
    border-radius: 2px;
    box-sizing: border-box;
  }

  .corner {
    position: absolute;
    right: 0;
    bottom: 3px;
  }

  .csep {
    width: 1px;
    height: 80px;
    background: #ccc;
    margin-left: 2px;
  }

  .stamp {
    width: 56px;
    padding-top: 3px;
    gap: 3px;
  }

  .stamp svg:first-child {
    margin-bottom: 3px;
  }

  .addlink {
    width: 56px;
    padding-top: 3px;
    gap: 1px;
  }

  .lrow {
    height: 28px;
    display: flex;
    align-items: center;
    gap: 2px;
    white-space: nowrap;
  }

  .protect .big {
    width: 65px;
    padding-top: 1px;
  }

  .signicon {
    height: 53px;
  }

  /* document tab strip */
  .docbar {
    height: 35px;
    flex: none;
    display: flex;
    box-sizing: border-box;
    background-color: #7b7b7b;
    background-image: radial-gradient(#858585 0.7px, transparent 1px);
    background-size: 3px 3px;
    border-top: 1px solid #333;
    border-bottom: 3px solid #f7dfb1;
    padding-top: 1px;
  }

  .doctab {
    width: 105px;
    margin-left: 1px;
    box-sizing: border-box;
    background: #fbe6bc;
    padding: 7px 0 0 5px;
    position: relative;
    font-size: 11.3px;
    white-space: nowrap;
    display: flex;
    justify-content: space-between;
  }

  .doctab::after {
    content: "";
    position: absolute;
    left: 5px;
    right: 5px;
    bottom: 0;
    height: 2px;
    background: #c9b486;
  }

  .doctab svg {
    margin: -2px 6px 0 0;
  }

  .newtab {
    width: 27px;
    height: 25px;
    margin: 3px 0 0 2px;
    background: #c8c8c8;
    display: flex;
    align-items: center;
    justify-content: center;
  }

  .closeall {
    width: 30px;
    height: 30px;
    margin-left: auto;
    margin-right: 2px;
    background: #c8c8c8;
    display: flex;
    align-items: center;
    justify-content: center;
  }

  /* main area */
  .work {
    flex: 1;
    min-height: 0;
    display: flex;
    background: #f0f0f0;
  }

  .sidebar {
    width: 33px;
    flex: none;
    box-sizing: border-box;
    background: #f0f0f0;
  }

  .sidetop {
    height: 11px;
    display: flex;
    justify-content: flex-end;
    align-items: center;
    padding-right: 3px;
    background: #e4e4e4;
  }

  .grip {
    width: 9px;
    height: 20px;
    background-image: radial-gradient(#b5b5b5 0.8px, transparent 1px);
    background-size: 3px 3px;
  }

  .grip.wide {
    width: 26px;
    height: 9px;
    margin: 1px 0 0 4px;
  }

  .sideicons {
    display: flex;
    flex-direction: column;
    align-items: center;
    gap: 3px;
    padding: 3px 2px 0 0;
  }

  .hline {
    width: 28px;
    height: 1px;
    background: #bbb;
    margin: -1px 0;
  }

  .more {
    margin-top: -3px;
  }

  .dot.side::after {
    right: -4px;
    bottom: 1px;
  }

  .right {
    flex: 1;
    min-width: 0;
    display: flex;
    flex-direction: column;
  }

  .viewer {
    height: 382px;
    flex: none;
    display: flex;
    overflow: hidden;
    box-sizing: border-box;
    border-top: 1px solid #666;
    border-left: 1px solid #555;
    margin-left: -1px;
  }

  .page {
    width: 840px;
    flex: none;
    box-sizing: border-box;
    background: #fff;
    padding: 28px 0 0 45px;
    font-family: "Liberation Sans", Arial, sans-serif;
    color: #000;
    border-right: 1px solid #333;
    overflow: hidden;
  }

  .page p {
    margin: 0;
  }

  .top {
    display: flex;
    gap: 8px;
  }

  .leftcol {
    width: 489px;
  }

  .gov {
    display: flex;
    font-size: 11px;
    line-height: 11px;
    height: 22px;
    margin-top: -1px;
  }

  .flag {
    margin: 1px 13px 0 0;
  }

  .page .fr {
    margin-left: 14px;
  }

  h1 {
    margin: 12px 0 0 51px;
    font-size: 19.3px;
    line-height: 23px;
    font-weight: bold;
  }

  .namerow {
    display: flex;
    align-items: center;
    margin: 31px 0 0 70px;
    font-size: 16.3px;
  }

  .namerow.dob {
    margin-top: 10px;
  }

  .nlabel {
    width: 118px;
    padding-bottom: 5px;
  }

  .bigfield {
    width: 206px;
    height: 30px;
    box-sizing: border-box;
    border: 1px solid #000;
    font-size: 25px;
    line-height: 28px;
    padding-left: 1px;
  }

  .shade {
    background: #f0f0f0;
    font-size: 9.3px;
    line-height: 10px;
  }

  .family {
    width: 345px;
    height: 37px;
    margin: 31px 0 0 1px;
    box-sizing: border-box;
    padding: 10px 0 0 8px;
    display: flex;
    justify-content: space-between;
    font-size: 9.5px;
    line-height: 11px;
  }

  .box {
    border: 1px solid #000;
    background: #fff;
    box-sizing: border-box;
    flex: none;
  }

  .famnum {
    width: 57px;
    height: 25px;
    margin: -2px 7px 0 0;
  }

  .lang {
    width: 488px;
    height: 84px;
    margin: 7px 0 0 1px;
    box-sizing: border-box;
    padding: 5px 0 0 8px;
    position: relative;
  }

  .lang::before {
    content: "";
    position: absolute;
    left: 0;
    top: 23px;
    width: 1px;
    height: 2px;
    background: #000;
  }

  .langrow {
    display: flex;
    align-items: center;
    height: 17px;
    padding-left: 18px;
  }

  .langrow.first {
    margin-top: 6px;
  }

  .langrow.second {
    margin-top: 9px;
  }

  .lname {
    width: 95px;
  }

  .check {
    width: 16px;
    height: 16px;
    box-sizing: border-box;
    border: 1px solid #222;
    background: #fff;
    margin-right: 5px;
  }

  .lopt {
    width: 60px;
  }

  .lfr {
    width: 52px;
  }

  .dashes {
    width: 468px;
    height: 2px;
    margin-top: 9px;
    background-image: repeating-linear-gradient(90deg, #c4c4c4 0 25px, transparent 25px 31.7px);
  }

  .other {
    width: 178px;
    height: 25px;
    margin-left: 5px;
  }

  .rightcol {
    width: 229px;
    font-size: 11px;
  }

  .protected {
    font-weight: bold;
    text-align: right;
    line-height: 12px;
    white-space: nowrap;
  }

  .pagenum {
    text-align: right;
    padding-right: 2px;
    margin-top: 5px;
    line-height: 12px;
    font-size: 9.7px;
  }

  .office {
    height: 65px;
    margin-top: 4px;
    box-sizing: border-box;
    border: 2px solid #222;
  }

  .ohead {
    height: 18px;
    box-sizing: border-box;
    border-bottom: 2px solid #222;
    text-align: center;
    font-weight: bold;
    font-size: 12.4px;
    line-height: 16px;
  }

  .obody {
    text-align: center;
    padding-top: 3px;
    line-height: 13px;
    white-space: nowrap;
  }

  .receipt {
    height: 212px;
    margin-top: 7px;
    box-sizing: border-box;
    border: 2px solid #222;
    border-top-width: 1px;
    text-align: center;
    padding-top: 2px;
    line-height: 13px;
  }

  .bottom {
    display: flex;
    margin-top: 5px;
    padding-left: 2px;
    gap: 32px;
  }

  .sec1 {
    width: 346px;
    height: 60px;
    box-sizing: border-box;
    padding: 5px 0 0 6px;
    white-space: nowrap;
    font-size: 9.5px;
  }

  .num {
    display: inline-block;
    width: 20px;
  }

  .famrow {
    display: flex;
    align-items: flex-start;
    margin-top: 4px;
    padding-left: 21px;
  }

  .famrow span {
    width: 64px;
    padding-top: 5px;
  }

  .famname {
    width: 245px;
    height: 30px;
  }

  .sec12 {
    width: 346px;
    height: 60px;
    box-sizing: border-box;
    padding: 8px 0 0 6px;
    white-space: nowrap;
    font-size: 9.5px;
  }

  .num12 {
    display: inline-block;
    width: 20px;
  }

  .years {
    display: flex;
    justify-content: space-between;
    padding-left: 21px;
    margin-top: 1px;
  }

  .years span {
    padding-top: 5px;
  }

  .yearsbox {
    width: 57px;
    height: 30px;
    margin-right: 9px;
  }

  .scrollbar {
    flex: 1;
    background: #f0f0f0;
    display: flex;
    flex-direction: column;
    align-items: center;
    padding-top: 3px;
  }

  .thumb {
    width: 6px;
    height: 61px;
    margin-top: 6px;
    border-radius: 3px;
    background: #8c8c8c;
  }

  .down {
    margin-top: auto;
    margin-bottom: 6px;
  }

  /* status bar */
  .status {
    flex: 1;
    display: flex;
    align-items: center;
    background: #f0f0f0;
    padding: 0 0 2px 1px;
    gap: 5px;
    position: relative;
  }

  .status > * {
    flex: none;
  }

  .griphold {
    display: flex;
    flex-direction: column;
    gap: 1px;
    width: 9px;
    margin-top: 4px;
  }

  .griphold .collapse {
    margin-left: 1px;
  }

  .gears {
    margin-left: -1px;
  }

  .options {
    font-size: 11.5px;
    margin-left: -3px;
    white-space: nowrap;
  }

  .griphold.g2 {
    margin-left: 21px;
  }

  .pagebox {
    width: 88px;
    height: 22px;
    margin-left: -1px;
    box-sizing: border-box;
    background: #fff;
    border: 1px solid #bbb;
    border-radius: 3px;
    display: flex;
    justify-content: flex-end;
    align-items: center;
    padding-right: 3px;
    font-size: 12px;
  }

  .slash {
    color: #777;
    margin: 0 1px;
  }

  .tot {
    font-size: 8px;
    color: #555;
    align-self: flex-start;
    margin-top: 2px;
  }

  .ssep {
    width: 1px;
    height: 28px;
    background: #ccc;
    margin-left: -2px;
  }

  .layouts {
    display: flex;
    align-items: center;
    gap: 4px;
    margin-left: 16px;
  }

  .lay-on {
    width: 27px;
    height: 27px;
    box-sizing: border-box;
    background: #e3d6ac;
    border: 1px solid #cbbb88;
    display: flex;
    align-items: center;
    justify-content: center;
    margin-left: 2px;
  }

  .combo.small {
    width: 80px;
    margin-left: -2px;
  }

  .slider {
    width: 100px;
    height: 4px;
    margin-left: -1px;
    position: relative;
    background: #c8c8c8;
  }

  .fill {
    width: 49px;
    height: 100%;
    background: #8a8a8a;
  }

  .knob {
    position: absolute;
    left: 39px;
    top: -8px;
    width: 20px;
    height: 20px;
    box-sizing: border-box;
    border-radius: 50%;
    background: radial-gradient(#777 0 3.5px, #fafafa 4px);
    border: 1px solid #777;
  }

  .griphold.g4 {
    margin-left: 3px;
  }

  .preview {
    margin-left: -1px;
  }

  .last {
    margin-left: 4px;
  }

  .pin-down {
    position: absolute;
    right: 2px;
    top: 2px;
  }
</style>
